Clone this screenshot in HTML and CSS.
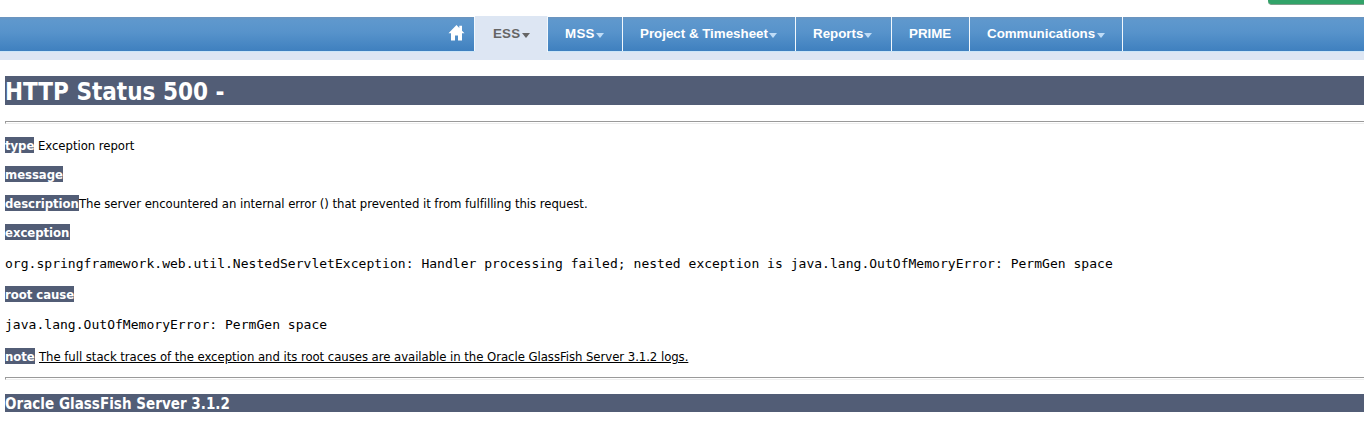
FILE: index.html
```html
<!DOCTYPE html>
<html lang="en">
<head>
<meta charset="utf-8">
<title>HTTP Status 500</title>
<link rel="stylesheet" href="styles.css">
</head>
<body>
<header class="top"><div class="action"></div></header>
<nav class="nav">
  <a class="home" aria-label="Home"><svg width="17" height="17" viewBox="0 0 17 17"><path d="M8.5 1 11.3 4V1.8H14V6.7L16.5 9.3H14V16.5H10V11.5H7V16.5H3V9.3H.5Z" fill="#fff"/></svg></a>
  <a class="tab active"><span class="t-ess">ESS</span><i class="caret"></i></a>
  <a class="tab mss"><span class="t-mss">MSS</span><i class="caret"></i></a>
  <a class="tab project"><span>Project &amp; Timesheet</span><i class="caret"></i></a>
  <a class="tab reports"><span>Reports</span><i class="caret"></i></a>
  <a class="tab prime"><span>PRIME</span></a>
  <a class="tab comms"><span>Communications</span><i class="caret small"></i></a>
</nav>
<div class="strip"></div>
<main class="report">
  <h1>HTTP Status 500 -</h1>
  <hr>
  <p><b class="w-type">type</b><span class="gap">Exception report</span></p>
  <p><b class="w-message">message</b></p>
  <p><b class="w-description">description</b><span>The server encountered an internal error () that prevented it from fulfilling this request.</span></p>
  <p><b class="w-exception">exception</b></p>
  <pre class="trace">org.springframework.web.util.NestedServletException: Handler processing failed; nested exception is java.lang.OutOfMemoryError: PermGen space</pre>
  <p><b class="w-root">root cause</b></p>
  <pre class="cause">java.lang.OutOfMemoryError: PermGen space</pre>
  <p><b class="w-note">note</b><u class="gap">The full stack traces of the exception and its root causes are available in the Oracle GlassFish Server 3.1.2 logs.</u></p>
  <hr class="last">
  <h3>Oracle GlassFish Server 3.1.2</h3>
</main>
</body>
</html>
```
FILE: styles.css
```css
body { margin: 0; background: #fff; color: #000; overflow: hidden; }
.top { height: 16px; display: flex; justify-content: flex-end; }
.action { width: 96px; height: 5px; box-sizing: border-box; background: #32a369; border-bottom: 1px solid #7f9f8c; border-bottom-left-radius: 4px; }
.nav {
  display: flex; height: 35px; box-sizing: border-box; border-top: 1px solid #fff;
  background: linear-gradient(#6c94bd 0, #5f98cd 3px, #5793cb 45%, #3f80bf 100%) padding-box;
  font: bold 13.333px/33px "Liberation Sans", sans-serif; color: #fff;
}
.home { width: 475px; box-sizing: border-box; padding: 7px 0 0 448px; line-height: 0; border-right: 1px solid #f2f8fd; }
.tab { display: flex; box-sizing: border-box; padding-left: 17px; border-right: 1px solid #f2f8fd; white-space: nowrap; }
.active { position: relative; width: 73px; height: 36px; margin-top: -1px; padding-left: 18px; background: #dde6f3; color: #656565; line-height: 35px; }
.mss { width: 75px; }
.project { width: 173px; }
.reports { width: 96px; }
.prime { width: 78px; }
.comms { width: 153px; }
.caret { margin: 16px 0 0 1px; width: 0; height: 0; border: 4px solid transparent; border-top: 5px solid #bfdcf7; border-bottom: 0; }
.active .caret { margin-top: 17px; margin-left: 2px; border-top-color: #656565; }
.t-ess { letter-spacing: .2px; }
.t-mss { letter-spacing: .3px; }
.small { margin-left: 2px; }
.strip { height: 9px; box-sizing: border-box; background: #dde6f3; border-top: 1px solid #cbe6f8; }
.report { padding: 16px 0 0 5px; font: 13px/18px "DejaVu Sans Condensed", "DejaVu Sans", sans-serif; font-stretch: condensed; letter-spacing: -.045px; }
h1, h3, b { background: #525d76; color: #fff; font-weight: bold; letter-spacing: 0; }
h1 { margin: 0 0 16px; height: 29px; font-size: 24px; line-height: 32px; }
h3 { margin: 0; height: 18px; font-size: 15px; line-height: 20px; letter-spacing: .03px; }
hr { box-sizing: border-box; height: 3px; margin: 0 0 13px; border: 0; border-top: 1px solid #9a9a9a; border-bottom: 1px solid #eee; border-left: 1px solid #9a9a9a; }
.last { margin: 13px 0 14px; }
p { display: flex; margin: 0 0 13px; height: 16px; white-space: nowrap; }
.gap { margin-left: 4px; }
b { letter-spacing: -.05px; }
.w-type { width: 29px; }
.w-message { width: 58px; }
.w-description { width: 74px; }
.w-exception { width: 65px; }
.w-root { width: 69px; }
.w-note { width: 30px; }
p:last-of-type { margin-bottom: 0; }
pre { margin: 0; font: 13px/16px "DejaVu Sans Mono", monospace; letter-spacing: .03px; }
.trace { padding: 3px 0 14px; }
.cause { padding: 2px 0 15px; }
```
